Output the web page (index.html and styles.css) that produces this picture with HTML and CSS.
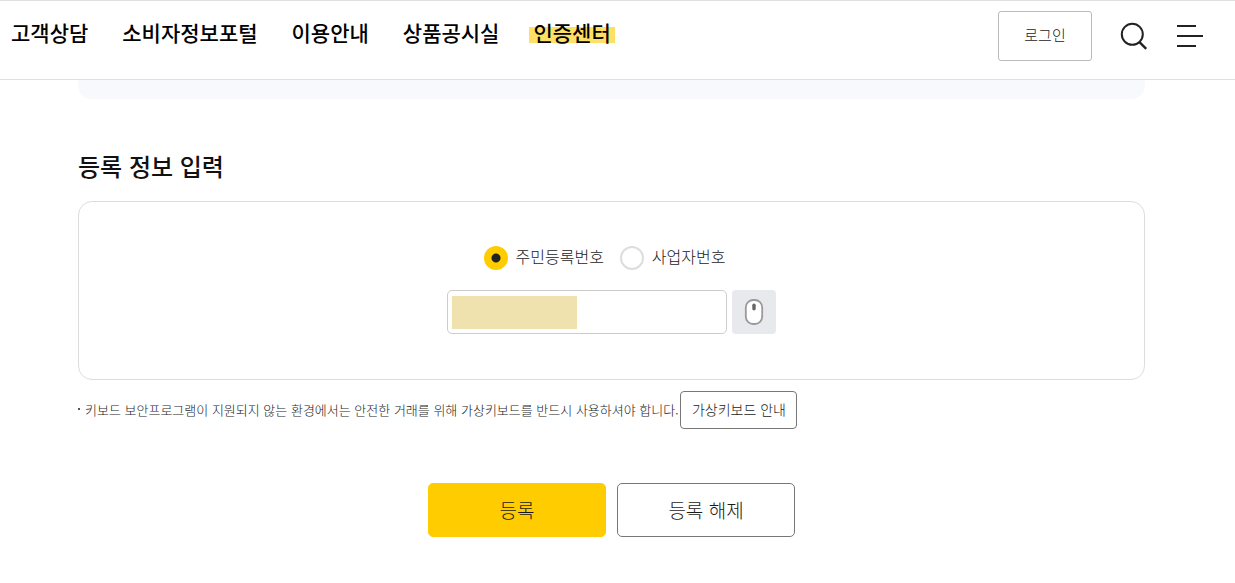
FILE: index.html
```html
<!DOCTYPE html>
<html lang="ko">
<head>
<meta charset="utf-8">
<meta name="viewport" content="width=device-width, initial-scale=1">
<title>인증센터</title>
<link rel="stylesheet" href="styles.css">
</head>
<body>
<header class="header">
  <nav class="nav">
    <a class="nav-link" href="#">고객상담</a>
    <a class="nav-link" href="#">소비자정보포털</a>
    <a class="nav-link" href="#">이용안내</a>
    <a class="nav-link" href="#">상품공시실</a>
    <a class="nav-link nav-link-active" href="#" aria-current="page">인증센터</a>
  </nav>
  <div class="tools">
    <button class="login" type="button">로그인</button>
    <button class="icon-button" type="button" aria-label="검색">
      <svg width="28" height="28" viewBox="0 0 28 28" fill="none" stroke="#222" stroke-width="2"><circle cx="12.3" cy="12.3" r="10.5"/><path d="M19.2 19.8l7 7" stroke-width="2.4"/></svg>
    </button>
    <button class="icon-button" type="button" aria-label="전체메뉴">
      <svg width="28" height="28" viewBox="0 0 28 28" fill="none" stroke="#222" stroke-width="2"><path d="M1 4h19M1 14h26M1 24h19"/></svg>
    </button>
  </div>
</header>
<main class="content">
  <div class="notice"></div>
  <h2 class="title">등록 정보 입력</h2>
  <form class="form">
    <div class="panel">
      <div class="choices">
        <label class="choice"><input class="radio" type="radio" name="kind" checked><span class="choice-text">주민등록번호</span></label>
        <label class="choice"><input class="radio" type="radio" name="kind"><span class="choice-text">사업자번호</span></label>
      </div>
      <div class="entry">
        <div class="field">
          <input class="number" type="text" aria-label="번호 입력">
          <span class="mask"></span>
        </div>
        <button class="keypad" type="button" aria-label="가상키보드">
          <svg width="20" height="28" viewBox="0 0 20 28"><rect x="1.8" y="2" width="16.4" height="24" rx="7.5" fill="#fff" stroke="#999" stroke-width="1.8"/><rect x="8.3" y="5.5" width="3.4" height="7" rx="1.7" fill="#666"/></svg>
        </button>
      </div>
    </div>
    <div class="help">
      <p class="help-text">키보드 보안프로그램이 지원되지 않는 환경에서는 안전한 거래를 위해 가상키보드를 반드시 사용하셔야 합니다.</p>
      <button class="guide" type="button">가상키보드 안내</button>
    </div>
    <div class="actions">
      <button class="action action-primary" type="button">등록</button>
      <button class="action" type="button">등록 해제</button>
    </div>
  </form>
</main>
</body>
</html>
```
FILE: styles.css
```css
* {
  box-sizing: border-box;
}

body {
  margin: 0;
  background: #fff;
  color: #1a1a1a;
  font-family: "Noto Sans CJK KR", sans-serif;
  font-weight: 300;
}

button,
input {
  margin: 0;
  padding: 0;
  font: inherit;
  color: inherit;
}

button {
  cursor: pointer;
}

svg {
  display: block;
}

.header {
  display: flex;
  justify-content: space-between;
  align-items: flex-start;
  height: 80px;
  padding: 10px 31px 0 7px;
  border-top: 1px solid #e0e0e0;
  border-bottom: 1px solid #e0e0e0;
}

.nav {
  display: flex;
  gap: 26px;
  padding-top: 6px;
}

.nav-link {
  padding: 0 4px;
  color: #000;
  font-size: 21px;
  font-weight: 500;
  line-height: 30px;
  text-decoration: none;
  white-space: nowrap;
}

.nav-link-active {
  background: linear-gradient(#ffe066, #ffe066) 0 10px / 100% 16px no-repeat;
}

.tools {
  display: flex;
  align-items: center;
  gap: 28px;
}

.login {
  width: 94px;
  height: 50px;
  padding-bottom: 4px;
  border: 1px solid #bbb;
  border-radius: 3px;
  background: #fff;
  font-size: 15px;
}

.icon-button {
  border: 0;
  background: none;
}

.content {
  padding: 0 90px 0 78px;
}

.notice {
  height: 19px;
  border-radius: 0 0 14px 14px;
  background: #f8f9fc;
}

.title {
  margin: 49px 0 17px;
  color: #111;
  font-size: 24px;
  font-weight: 500;
  line-height: 36px;
}

.panel {
  display: flex;
  flex-direction: column;
  align-items: center;
  gap: 20px;
  padding: 44px 20px 45px;
  border: 1px solid #ddd;
  border-radius: 14px;
}

.choices {
  display: flex;
  gap: 16px;
  padding-right: 14px;
}

.choice {
  display: flex;
  align-items: center;
  gap: 8px;
  font-size: 16px;
  line-height: 20px;
}

.choice-text {
  padding-bottom: 4px;
}

.radio {
  appearance: none;
  width: 24px;
  height: 24px;
  border: 2px solid #ddd;
  border-radius: 50%;
  background: #fff;
}

.radio:checked {
  border-color: #fc0;
  background: radial-gradient(circle, #222 4px, #fc0 5px);
}

.entry {
  display: flex;
  gap: 5px;
}

.field {
  position: relative;
}

.number {
  display: block;
  width: 280px;
  height: 44px;
  padding: 0 12px;
  border: 1px solid #ccc;
  border-radius: 5px;
  background: #fff;
}

.mask {
  position: absolute;
  top: 6px;
  left: 5px;
  width: 125px;
  height: 33px;
  background: #efe2ae;
}

.keypad {
  display: grid;
  place-items: center;
  width: 44px;
  height: 44px;
  border: 0;
  border-radius: 4px;
  background: #e8e9ed;
}

.help {
  display: flex;
  align-items: center;
  gap: 2px;
  margin-top: 11px;
}

.help-text {
  display: flex;
  align-items: center;
  gap: 5px;
  margin: 0;
  padding-bottom: 2px;
  font-size: 13px;
}

.help-text::before {
  content: "";
  width: 2px;
  height: 2px;
  background: #555;
}

.guide {
  width: 117px;
  height: 38px;
  padding-bottom: 2px;
  border: 1px solid #777;
  border-radius: 4px;
  background: #fff;
  font-size: 14px;
}

.actions {
  display: flex;
  justify-content: center;
  gap: 11px;
  margin-top: 54px;
}

.action {
  width: 178px;
  height: 54px;
  padding-bottom: 2px;
  border: 1px solid #777;
  border-radius: 5px;
  background: #fff;
  font-size: 19px;
}

.action-primary {
  border-color: #fc0;
  background: #fc0;
}
```
